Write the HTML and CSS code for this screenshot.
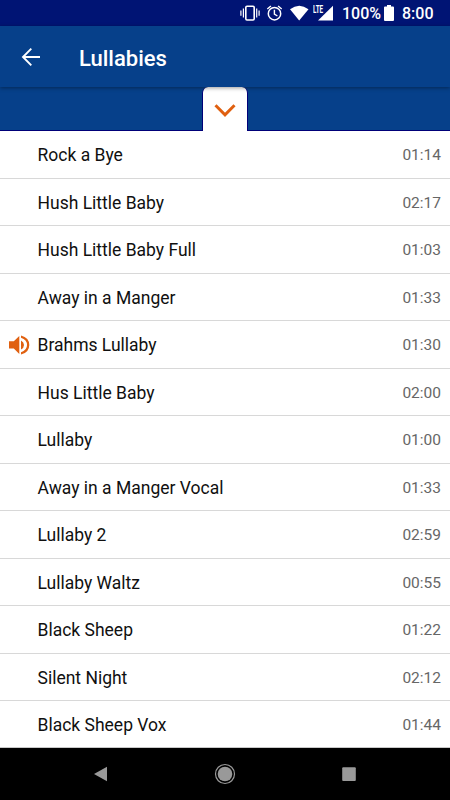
FILE: index.html
```html
<!DOCTYPE html>
<html lang="en">
<head>
<meta charset="utf-8">
<title>Lullabies</title>
<link rel="stylesheet" href="styles.css">
</head>
<body>
<div class="screen">
  <div class="status">
    <svg class="status-icons" width="98" height="26" viewBox="0 0 98 26" fill="none" stroke="#fff">
      <rect x="5.800" y="6.200" width="8.400" height="13.800" rx="1.200" stroke-width="1.600"/>
      <path d="M3.400 8.600v9M.9 10.400v5.400M16.700 8.600v9M19.100 10.400v5.400" stroke-width="1.200"/>
      <circle cx="34.500" cy="13.700" r="6.200" stroke-width="1.500"/>
      <path d="M27.300 9l3.600-3M41.700 9l-3.600-3M34.400 9.800v4.400l3 1.800" stroke-width="1.400"/>
      <path d="M50 9.300Q59.200 2 68.500 9.300L59.200 20.600Z" fill="#fff" stroke="none"/>
      <path d="M93 5.800V20.600H78Z" fill="#fff" stroke="none"/>
    </svg>
    <span class="lte">LTE</span>
    <span class="percent">100%</span>
    <svg class="battery" width="10" height="26" viewBox="0 0 10 26"><path d="M3 5h4v1.600h2q1 0 1 1V20q0 1-1 1H1q-1 0-1-1V7.600q0-1 1-1h2Z" fill="#fff"/></svg>
    <span class="clock">8:00</span>
  </div>
  <header class="bar">
    <svg class="back" width="20" height="20" viewBox="0 0 20 20" fill="none" stroke="#fff" stroke-width="1.900"><path d="M19 10H2.500M10.300 1.700L2 10l8.300 8.300"/></svg>
    <h1>Lullabies</h1>
  </header>
  <div class="drawer">
    <div class="tab"><svg width="22" height="14" viewBox="0 0 22 14" fill="none" stroke="#e06010" stroke-width="3"><path d="M1.500 1.300L11 10.800l9.500-9.500"/></svg></div>
  </div>
  <ul class="list">
    <li><span class="name">Rock a Bye</span><span class="time">01:14</span></li>
    <li><span class="name">Hush Little Baby</span><span class="time">02:17</span></li>
    <li><span class="name">Hush Little Baby Full</span><span class="time">01:03</span></li>
    <li><span class="name">Away in a Manger</span><span class="time">01:33</span></li>
    <li><svg class="speaker" width="22" height="22" viewBox="0 0 22 22" fill="#e06010"><path d="M0 7.300h4.800L10.300 2v18L4.800 14.600H0ZM12 6.400q3 1.600 3 4.600t-3 4.600ZM12 1.400q8.300 2.100 8.300 9.600T12 20.600v-2.300q6-2 6-7.300t-6-7.300Z"/></svg><span class="name">Brahms Lullaby</span><span class="time">01:30</span></li>
    <li><span class="name">Hus Little Baby</span><span class="time">02:00</span></li>
    <li><span class="name">Lullaby</span><span class="time">01:00</span></li>
    <li><span class="name">Away in a Manger Vocal</span><span class="time">01:33</span></li>
    <li><span class="name">Lullaby 2</span><span class="time">02:59</span></li>
    <li><span class="name">Lullaby Waltz</span><span class="time">00:55</span></li>
    <li><span class="name">Black Sheep</span><span class="time">01:22</span></li>
    <li><span class="name">Silent Night</span><span class="time">02:12</span></li>
    <li><span class="name">Black Sheep Vox</span><span class="time">01:44</span></li>
  </ul>
  <nav class="nav">
    <svg width="22" height="22" viewBox="0 0 22 22" fill="#999"><path d="M4 11L17 3.800V18.200Z"/></svg>
    <svg width="22" height="22" viewBox="0 0 22 22"><circle cx="11" cy="11" r="7.300" fill="#999"/><circle cx="11" cy="11" r="9.500" fill="none" stroke="#999" stroke-width="1.200"/></svg>
    <svg width="22" height="22" viewBox="0 0 22 22" fill="#999"><rect x="4.200" y="4.300" width="13.600" height="13.600" rx="1"/></svg>
  </nav>
</div>
</body>
</html>
```

FILE: styles.css
```css
* { box-sizing: border-box; }
body { margin: 0; font-family: Roboto, "Liberation Sans", sans-serif; background: #fff; }
.screen { width: 450px; height: 800px; display: flex; flex-direction: column; overflow: hidden; }
svg { display: block; flex: none; }
.status { position: relative; height: 26px; flex: none; display: flex; align-items: center; padding-left: 240px; background: #001474; color: #fff; font-size: 16px; font-weight: 500; line-height: 26px; white-space: nowrap; }
.lte { position: absolute; left: 313px; top: 3px; font-size: 10px; line-height: 13px; font-weight: 700; transform: scaleX(0.63); transform-origin: left; }
.percent { width: 42px; margin-left: 4px; padding-top: 2px; }
.clock { margin-left: 8px; padding-top: 2px; }
.bar { position: relative; z-index: 1; height: 61px; flex: none; display: flex; align-items: center; padding-left: 21px; background: #06408a; box-shadow: 0 1px 4px rgba(0, 0, 0, 0.4); color: #fff; }
h1 { margin: 4px 0 0 38px; font-size: 22px; line-height: 26px; font-weight: 500; }
.drawer { height: 44px; flex: none; display: flex; justify-content: center; background: #06408a; border-bottom: 1px solid #000078; }
.tab { width: 46px; height: 44px; display: flex; justify-content: center; padding-top: 17px; background: #fff; border: 1px solid #000078; border-width: 0 1px; border-radius: 6px 6px 0 0; }
.list { margin: 0; padding: 0; list-style: none; flex: none; height: 617px; border-bottom: 1px solid #c8c8c8; overflow: hidden; }
.list li { position: relative; height: 47.5px; display: flex; align-items: center; justify-content: space-between; padding: 3px 9px 0 37.5px; border-bottom: 1px solid #d8d8d8; }
.name { font-size: 17.5px; line-height: 21px; color: #101010; }
.time { font-size: 15.5px; line-height: 19px; color: #666; }
.speaker { position: absolute; left: 8.5px; top: 12.5px; }
.nav { flex: 1; display: flex; align-items: center; justify-content: space-between; padding: 0 90px; background: #000; }
```
